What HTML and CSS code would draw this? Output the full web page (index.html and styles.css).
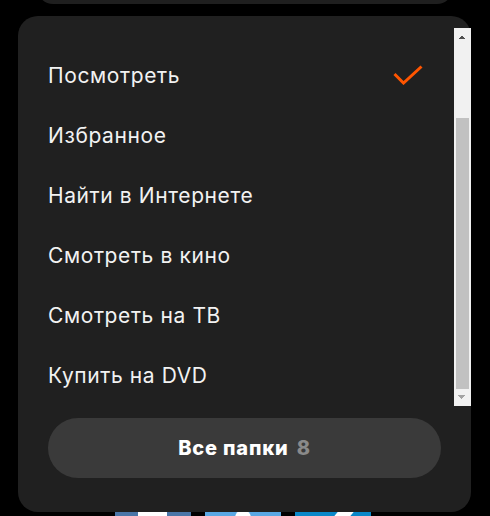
FILE: index.html
```html
<!DOCTYPE html>
<html lang="ru">
<head>
<meta charset="utf-8">
<link rel="stylesheet" href="styles.css">
</head>
<body>
<div class="page">
  <div class="topcard"></div>
  <div class="panel">
    <div class="scroller">
      <ul class="list">
        <li class="item active"><span>Посмотреть</span>
          <svg class="check" width="30" height="20" viewBox="0 0 30 20"><polyline points="1.5,9 10.5,18 28.5,1.5" fill="none" stroke="#ff5500" stroke-width="3"/></svg>
        </li>
        <li class="item"><span>Избранное</span></li>
        <li class="item"><span>Найти в Интернете</span></li>
        <li class="item"><span>Смотреть в кино</span></li>
        <li class="item"><span>Смотреть на ТВ</span></li>
        <li class="item"><span>Купить на DVD</span></li>
      </ul>
      <div class="scrollbar" aria-hidden="true">
        <div class="sb-btn up"></div>
        <div class="sb-track"><div class="sb-thumb"></div></div>
        <div class="sb-btn down"></div>
      </div>
    </div>
    <button class="all">Все папки <span class="count">8</span></button>
  </div>
  <div class="share">
    <div class="tile vk"><i></i></div>
    <div class="tile tw"><i></i></div>
    <div class="tile tg"><i></i></div>
  </div>
</div>
</body>
</html>
```
FILE: styles.css
```css
html, body {
  margin: 0;
  padding: 0;
  background: #000;
}
body {
  width: 490px;
  height: 516px;
  overflow: hidden;
  font-family: Inter, "Noto Sans", sans-serif;
}
.page {
  display: flex;
  flex-direction: column;
}
.topcard {
  margin: -40px 37px 0 37px;
  height: 44px;
  background: #1f1f1f;
  border-radius: 0 0 16px 16px;
}
.panel {
  position: relative;
  z-index: 1;
  margin: 12px 0 0 18px;
  width: 453px;
  height: 496px;
  box-sizing: border-box;
  background: #202020;
  border-radius: 20px;
  padding-top: 12px;
  display: flex;
  flex-direction: column;
}
.scroller {
  height: 378px;
  display: flex;
}
.list {
  flex: 1;
  list-style: none;
  margin: 0;
  padding: 17px 30px 0 30px;
}
.item {
  height: 60px;
  display: flex;
  align-items: center;
  justify-content: space-between;
  color: #f2f2f2;
  font-size: 21px;
  letter-spacing: 0.6px;
}
.check {
  display: block;
  margin-right: 1px;
}
.scrollbar {
  width: 17px;
  background: #f1f1f1;
  display: flex;
  flex-direction: column;
}
.sb-btn {
  height: 17px;
  background-repeat: no-repeat;
  background-size: 4px 4px, 4px 4px;
}
.sb-btn.up {
  background-image:
    linear-gradient(to top left, #505050 50%, transparent 50%),
    linear-gradient(to top right, #505050 50%, transparent 50%);
  background-position: 4px 7px, 8px 7px;
}
.sb-btn.down {
  background-image:
    linear-gradient(to bottom left, #a3a3a3 50%, transparent 50%),
    linear-gradient(to bottom right, #a3a3a3 50%, transparent 50%);
  background-position: 4px 6px, 8px 6px;
}
.sb-track {
  flex: 1;
  display: flex;
  flex-direction: column;
  justify-content: flex-end;
}
.sb-thumb {
  height: 271px;
  margin: 0 2px;
  background: #c1c1c1;
}
.all {
  margin: 12px 30px 0 30px;
  height: 60px;
  border: 0;
  border-radius: 30px;
  background: #3a3a3a;
  color: #fff;
  font-family: Inter, "Noto Sans", sans-serif;
  font-size: 20px;
  font-weight: 800;
  letter-spacing: 0.8px;
}
.count {
  color: #8a8a8a;
  margin-left: 3px;
}
.share {
  display: flex;
  gap: 14px;
  margin: -12px 0 0 115px;
}
.tile {
  width: 76px;
  height: 40px;
  position: relative;
}
.tile i {
  position: absolute;
  top: 10px;
  height: 20px;
  background: #fff;
}
.vk { background: #4a76a8; }
.vk i { left: 23px; width: 29px; }
.tw { background: #5aa8e4; }
.tw i { left: 30px; width: 16px; border-radius: 8px; }
.tg { background: #0a88c9; }
.tg i { left: 36px; width: 16px; transform: skewX(-40deg); }
```
